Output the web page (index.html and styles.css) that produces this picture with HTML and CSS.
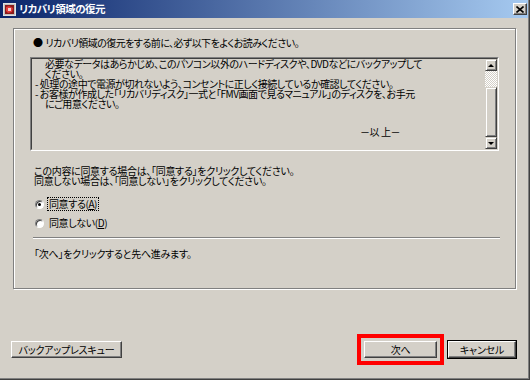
FILE: index.html
```html
<!DOCTYPE html>
<html lang="ja">
<head>
<meta charset="utf-8">
<title>リカバリ領域の復元</title>
<link rel="stylesheet" href="styles.css">
</head>
<body>
<div class="window">
  <div class="frame">
    <div class="titlebar">
      <svg class="app-icon" width="13" height="13" viewBox="0 0 13 13">
        <rect x="0.5" y="0.5" width="12" height="12" fill="#c0c0c0" stroke="#e0e0e0"/>
        <rect x="2" y="2" width="9" height="9" fill="#8a1a1a"/>
        <path d="M3 4 L6 3 L10 5 L9 9 L5 10 L3 8 Z" fill="#e23a3a"/>
        <path d="M5 5 L8 5 L8 8 L5 8 Z" fill="#f4d0d0"/>
      </svg>
      <span class="title">リカバリ領域の復元</span>
      <span class="close">
        <svg width="8" height="7" viewBox="0 0 8 7"><path d="M0.5 0.5 L7.5 6.5 M7.5 0.5 L0.5 6.5" stroke="#000" stroke-width="1.6"/></svg>
      </span>
    </div>
    <div class="content">
      <div class="panel">
        <p class="lead"><span class="dot">●</span>リカバリ領域の復元をする前に、必ず以下をよくお読みください。</p>
        <div class="textbox">
          <div class="textbox-inner">
            <div class="text">
              <div class="ind">必要なデータはあらかじめ、このパソコン以外のハードディスクや、DVDなどにバックアップして</div>
              <div class="ind">ください。</div>
              <div>- 処理の途中で電源が切れないよう、コンセントに正しく接続しているか確認してください。</div>
              <div>- お客様が作成した「リカバリディスク」一式と「FMV画面で見るマニュアル」のディスクを、お手元</div>
              <div class="ind">にご用意ください。</div>
              <div class="end">－以 上－</div>
            </div>
            <div class="scrollbar">
              <div class="sb-btn"><span class="arrow-up"></span></div>
              <div class="sb-track"></div>
              <div class="sb-thumb"></div>
              <div class="sb-btn"><span class="arrow-down"></span></div>
            </div>
          </div>
        </div>
        <p class="note">この内容に同意する場合は、「同意する」をクリックしてください。<br>同意しない場合は、「同意しない」をクリックしてください。</p>
        <div class="radios">
          <div class="radio"><span class="rb checked"></span><span class="rlabel focus">同意する(<u>A</u>)</span></div>
          <div class="radio"><span class="rb"></span><span class="rlabel">同意しない(<u>D</u>)</span></div>
        </div>
        <div class="sep"></div>
        <p class="hint">「次へ」をクリックすると先へ進みます。</p>
      </div>
      <div class="buttons">
        <button class="btn backup">バックアップレスキュー</button>
        <div class="right">
          <button class="btn next">次へ</button>
          <button class="btn cancel">キャンセル</button>
        </div>
      </div>
    </div>
  </div>
</div>
</body>
</html>
```
FILE: styles.css
```css
html, body {
  margin: 0;
  padding: 0;
}
body {
  width: 530px;
  height: 380px;
  overflow: hidden;
  background: #D4D0C8;
  font-family: "Noto Sans CJK JP", "Noto Sans", sans-serif;
  font-size: 10px;
  letter-spacing: -0.4px;
  font-feature-settings: "palt";
  color: #000;
}
.window {
  width: 530px;
  height: 380px;
  box-sizing: border-box;
  border-right: 1px solid #404040;
  border-bottom: 1px solid #404040;
}
.frame {
  height: 100%;
  box-sizing: border-box;
  border-right: 1px solid #808080;
  border-bottom: 1px solid #808080;
  display: flex;
  flex-direction: column;
}
.titlebar {
  height: 18px;
  flex: none;
  display: flex;
  align-items: center;
  padding: 0 1px 0 3px;
  background: linear-gradient(to right, #0A246A, #A6CAF0);
}
.app-icon {
  display: block;
  flex: none;
}
.title {
  margin-left: 3px;
  color: #fff;
  font-weight: bold;
  font-size: 10.5px;
  line-height: 18px;
  letter-spacing: -0.5px;
  flex: 1;
}
.close {
  width: 14px;
  height: 12px;
  box-sizing: border-box;
  display: flex;
  align-items: center;
  justify-content: center;
  background: #D4D0C8;
  border: 1px solid;
  border-color: #fff #404040 #404040 #fff;
  box-shadow: inset -1px -1px 0 #808080;
}
.close svg { display: block; }
.content {
  flex: 1;
  display: flex;
  flex-direction: column;
}
.panel {
  margin: 10px 0 0 13px;
  width: 503px;
  height: 261px;
  box-sizing: border-box;
  border: 1px solid #808080;
  box-shadow: inset 1px 1px 0 #fff, 1px 1px 0 #fff;
  padding: 8px 0 0 16px;
  display: flex;
  flex-direction: column;
}
p { margin: 0; }
.lead {
  margin-left: 3px;
  line-height: 12px;
  letter-spacing: -0.55px;
  white-space: nowrap;
}
.lead .dot {
  margin-right: 3px;
}
.textbox {
  margin-top: 8px;
  width: 469px;
  height: 94px;
  box-sizing: border-box;
  border: 1px solid;
  border-color: #808080 #fff #fff #808080;
}
.textbox-inner {
  height: 100%;
  box-sizing: border-box;
  border: 1px solid;
  border-color: #404040 #D4D0C8 #D4D0C8 #404040;
  display: flex;
}
.text {
  flex: 1;
  padding: 0 0 0 3px;
  line-height: 10px;
  letter-spacing: -0.45px;
  white-space: nowrap;
  overflow: hidden;
}
.text .ind { padding-left: 10px; }
.text .end {
  margin-top: 18px;
  padding-left: 325px;
}
.scrollbar {
  width: 12px;
  flex: none;
  display: flex;
  flex-direction: column;
}
.sb-btn {
  height: 12px;
  flex: none;
  box-sizing: border-box;
  background: #D4D0C8;
  border: 1px solid;
  border-color: #D4D0C8 #404040 #404040 #D4D0C8;
  box-shadow: inset 1px 1px 0 #fff, inset -1px -1px 0 #808080;
  display: flex;
  align-items: center;
  justify-content: center;
}
.arrow-up {
  width: 0;
  height: 0;
  border-left: 3px solid transparent;
  border-right: 3px solid transparent;
  border-bottom: 3px solid #000;
}
.arrow-down {
  width: 0;
  height: 0;
  border-left: 3px solid transparent;
  border-right: 3px solid transparent;
  border-top: 3px solid #000;
}
.sb-track {
  height: 16px;
  flex: none;
  background-color: #D4D0C8;
  background-image: repeating-conic-gradient(#fff 0 25%, #D4D0C8 0 50%);
  background-size: 2px 2px;
}
.sb-thumb {
  flex: 1;
  box-sizing: border-box;
  background: #D4D0C8;
  border: 1px solid;
  border-color: #D4D0C8 #404040 #404040 #D4D0C8;
  box-shadow: inset 1px 1px 0 #fff, inset -1px -1px 0 #808080;
}
.note {
  margin: 15px 0 0 4px;
  line-height: 10px;
  letter-spacing: -0.3px;
  white-space: nowrap;
}
.radios {
  margin: 11px 0 0 5px;
  display: flex;
  flex-direction: column;
  gap: 5px;
}
.radio {
  height: 14px;
  display: flex;
  align-items: center;
}
.rb {
  width: 9px;
  height: 9px;
  box-sizing: border-box;
  border-radius: 50%;
  background: #fff;
  border: 1px solid;
  border-color: #808080 #fff #fff #808080;
  box-shadow: inset 1px 1px 0 #404040;
  display: flex;
  align-items: center;
  justify-content: center;
  flex: none;
}
.rb.checked::after {
  content: "";
  width: 3px;
  height: 3px;
  border-radius: 50%;
  background: #000;
}
.rlabel {
  margin-left: 4px;
  padding: 0 1px;
  line-height: 12px;
}
.rlabel.focus {
  outline: 1px dotted #000;
}
.sep {
  margin: 7px 0 0 3px;
  width: 467px;
  height: 0;
  border-top: 1px solid #808080;
  border-bottom: 1px solid #fff;
}
.hint {
  margin: 9px 0 0 4px;
  line-height: 12px;
  letter-spacing: -0.25px;
}
.buttons {
  margin-top: 52px;
  padding: 0 12px 0 11px;
  display: flex;
  justify-content: space-between;
  align-items: flex-start;
}
.right {
  display: flex;
  gap: 10px;
}
.btn {
  height: 17px;
  box-sizing: border-box;
  padding: 0;
  margin: 0;
  font-family: inherit;
  font-size: 10px;
  letter-spacing: -0.2px;
  font-feature-settings: "palt";
  line-height: 13px;
  color: #000;
  background: #D4D0C8;
  border: 1px solid;
  border-color: #fff #404040 #404040 #fff;
  box-shadow: inset -1px -1px 0 #808080;
}
.backup { width: 111px; }
.next {
  width: 73px;
  outline: 4px solid #f00;
  outline-offset: 3px;
}
.cancel {
  width: 68px;
  margin-left: 1px;
  box-shadow: 0 0 0 1px #000, inset -1px -1px 0 #808080;
}
```
